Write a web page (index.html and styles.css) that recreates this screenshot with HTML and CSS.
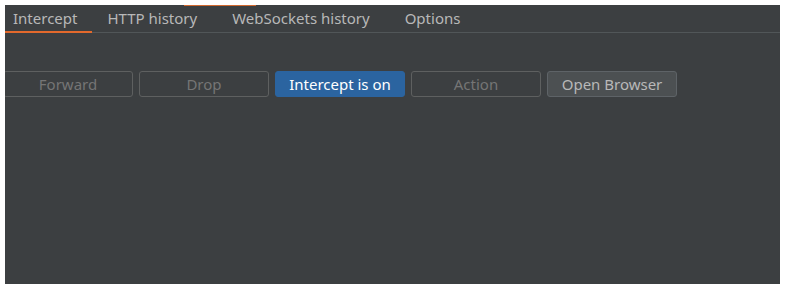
FILE: index.html
```html
<!DOCTYPE html>
<html lang="en">
<head>
    <meta charset="UTF-8">
    <meta name="viewport" content="width=device-width, initial-scale=1.0">
    <title>Proxy</title>
    <link rel="stylesheet" href="styles.css">
</head>
<body>
    <div class="panel">
        <div class="top-mark"></div>
        <div class="inner">
            <div class="tabs">
                <div class="tab active">Intercept</div>
                <div class="tab">HTTP history</div>
                <div class="tab">WebSockets history</div>
                <div class="tab">Options</div>
                <div class="tab-fill"></div>
            </div>
            <div class="toolbar">
                <button class="btn" disabled>Forward</button>
                <button class="btn" disabled>Drop</button>
                <button class="btn primary">Intercept is on</button>
                <button class="btn" disabled>Action</button>
                <button class="btn enabled">Open Browser</button>
            </div>
        </div>
    </div>
</body>
</html>
```

FILE: styles.css
```css
body {
    margin: 0;
    background: #ffffff;
    font-family: "Noto Sans", sans-serif;
    font-size: 15px;
}
.panel {
    position: relative;
    margin: 5px 5px 0 5px;
    width: 775px;
    height: 279px;
    background: #3c3f41;
    overflow: hidden;
}
.top-mark {
    position: absolute;
    top: 0;
    left: 179px;
    width: 72px;
    height: 1px;
    background: #d2692f;
}
.inner {
    margin-left: -6px;
}
.tabs {
    display: flex;
    height: 28px;
}
.tab {
    padding: 0 20px 0 15px;
    line-height: 27px;
    color: #b8b8b8;
    border-bottom: 1px solid #515658;
    white-space: nowrap;
}
.tab.active {
    padding-left: 14px;
    padding-right: 15px;
    border-bottom: 2px solid #e3692c;
    line-height: 26px;
}
.tab-fill {
    flex: 1;
    border-bottom: 1px solid #515658;
}
.toolbar {
    display: flex;
    gap: 6px;
    padding: 38px 0 0 4px;
}
.btn {
    width: 130px;
    height: 26px;
    padding: 0;
    font-family: "Noto Sans", sans-serif;
    font-size: 15px;
    border-radius: 3px;
    border: 1px solid #5e6060;
    background: #3c3f41;
    color: #757575;
}
.btn.primary {
    background: #2b64a0;
    border-color: #2b64a0;
    color: #ffffff;
}
.btn.enabled {
    background: #4c5052;
    border-color: #5e6367;
    color: #b8b8b8;
}
```
